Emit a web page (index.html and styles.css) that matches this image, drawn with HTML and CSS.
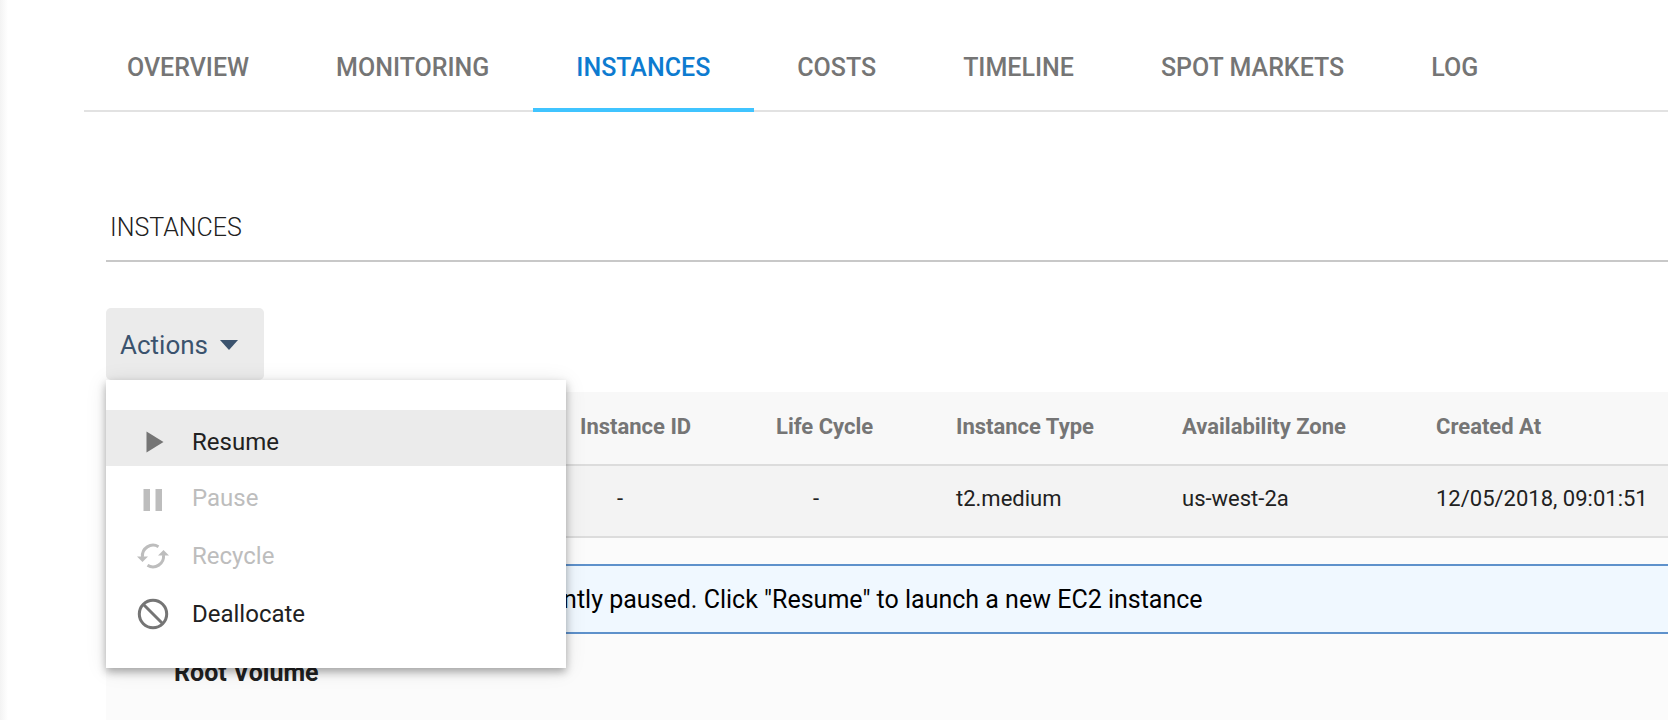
FILE: index.html
```html
<!DOCTYPE html>
<html lang="en">
<head>
<meta charset="utf-8">
<title>Instances</title>
<link rel="stylesheet" href="styles.css">
</head>
<body>
<div class="page">
  <nav class="tabs">
    <a class="tab" href="#overview">OVERVIEW</a>
    <a class="tab" href="#monitoring">MONITORING</a>
    <a class="tab tab-active" href="#instances" aria-current="page">INSTANCES</a>
    <a class="tab" href="#costs">COSTS</a>
    <a class="tab" href="#timeline">TIMELINE</a>
    <a class="tab" href="#spot-markets">SPOT MARKETS</a>
    <a class="tab" href="#log">LOG</a>
  </nav>
  <main class="content">
    <h1 class="title">INSTANCES</h1>
    <div class="actions">
      <button class="actions-button" type="button" aria-haspopup="menu" aria-expanded="true">
        Actions
        <svg class="caret" viewBox="0 0 18 10" aria-hidden="true"><path d="M0 0h18L9 10z"/></svg>
      </button>
      <div class="menu" role="menu">
        <button class="item item-hover" type="button" role="menuitem">
          <svg class="icon" viewBox="0 0 32 32" aria-hidden="true"><path d="M9.500 5.500l17 10.500-17 10.500z"/></svg>
          Resume
        </button>
        <button class="item" type="button" role="menuitem" disabled>
          <svg class="icon" viewBox="0 0 32 32" aria-hidden="true"><path d="M6.500 7h6.500v22H6.500zM18.500 7h6.500v22h-6.500z"/></svg>
          Pause
        </button>
        <button class="item" type="button" role="menuitem" disabled>
          <svg class="icon" viewBox="0 0 32 32" aria-hidden="true"><path class="stroke" d="M5.500 17A10.600 10.600 0 0 1 21.500 6.700"/><path d="M0 16.500h11l-5.500 5.500zM21 15.500h11L26.500 10z"/><path class="stroke" d="M26.500 15A10.600 10.600 0 0 1 10.500 25.300"/></svg>
          Recycle
        </button>
        <button class="item" type="button" role="menuitem">
          <svg class="icon" viewBox="0 0 32 32" aria-hidden="true"><circle class="stroke" cx="16" cy="16" r="13.700"/><path class="stroke" d="M6.500 6.500l19 19"/></svg>
          Deallocate
        </button>
      </div>
    </div>
    <table class="table">
      <colgroup>
        <col class="col-lead"><col class="col-id"><col class="col-cycle"><col class="col-type"><col class="col-zone"><col>
      </colgroup>
      <thead>
        <tr><th></th><th>Instance ID</th><th>Life Cycle</th><th>Instance Type</th><th>Availability Zone</th><th>Created At</th></tr>
      </thead>
      <tbody>
        <tr><td></td><td class="empty">-</td><td class="empty">-</td><td>t2.medium</td><td>us-west-2a</td><td>12/05/2018, 09:01:51</td></tr>
      </tbody>
    </table>
    <section class="details">
      <p class="notice">The instance is currently paused. Click "Resume" to launch a new EC2 instance</p>
      <h2 class="subtitle">Root Volume</h2>
    </section>
  </main>
</div>
</body>
</html>
```
FILE: styles.css
```css
* {
  box-sizing: border-box;
}

body {
  margin: 0;
  background: #fff;
  color: #212121;
  font-family: Roboto, "Liberation Sans", sans-serif;
  font-size: 24px;
  line-height: 28px;
}

button {
  margin: 0;
  border: 0;
  background: none;
  color: inherit;
  font: inherit;
  text-align: left;
}

.page {
  display: flex;
  flex-direction: column;
  min-height: 100vh;
  padding-left: 84px;
  background: linear-gradient(to right, #f3f3f3, #fff 8px);
  overflow: hidden;
}

.tabs {
  display: flex;
  padding-top: 54px;
  border-bottom: 2px solid #e2e2e2;
}

.tab {
  margin-bottom: -2px;
  padding: 0 44px 26px 43px;
  border-bottom: 4px solid transparent;
  color: #757575;
  font-size: 25px;
  font-weight: 500;
  text-decoration: none;
  white-space: nowrap;
}

.tab-active {
  border-bottom-color: #40c4ff;
  color: #0d7bd0;
}

.content {
  display: flex;
  flex: 1;
  flex-direction: column;
  padding-left: 22px;
}

.title {
  margin: 102px 0 46px;
  padding: 0 4px 18px;
  border-bottom: 2px solid #c8c8c8;
  font-size: 25px;
  font-weight: 300;
}

.actions {
  position: relative;
  align-self: flex-start;
  margin-bottom: 12px;
}

.actions-button {
  display: flex;
  align-items: center;
  gap: 12px;
  width: 158px;
  height: 72px;
  padding: 1px 14px 0;
  border-radius: 5px;
  background: #ebebeb;
  color: #3b536e;
  font-size: 26px;
}

.caret {
  width: 18px;
  height: 10px;
  fill: currentColor;
}

.menu {
  position: absolute;
  top: 100%;
  left: 0;
  z-index: 1;
  display: flex;
  flex-direction: column;
  width: 460px;
  padding: 30px 0 28px;
  background: #fff;
  box-shadow: 0 4px 8px rgba(0, 0, 0, 0.3), 0 2px 20px rgba(0, 0, 0, 0.1);
}

.item {
  display: flex;
  align-items: center;
  gap: 23px;
  height: 58px;
  padding: 16px 31px 10px;
}

.item-hover {
  height: 56px;
  padding-bottom: 8px;
  background: #ebebeb;
}

.item:disabled {
  color: #bdbdbd;
}

.icon {
  width: 32px;
  height: 32px;
  fill: #757575;
}

.stroke {
  fill: none;
  stroke: #757575;
  stroke-width: 3;
}

.item:disabled .icon {
  fill: #bdbdbd;
}

.item:disabled .stroke {
  fill: none;
  stroke: #bdbdbd;
}

.table {
  width: 100%;
  table-layout: fixed;
  border-collapse: separate;
  border-spacing: 0;
  font-size: 22px;
}

.table th,
.table td {
  padding: 19px 0 23px;
  text-align: left;
  white-space: nowrap;
}

.table th {
  padding: 21px 0 23px;
  border-bottom: 2px solid #dcdcdc;
  background: #f8f8f8;
  color: #757575;
  font-weight: 700;
}

.table td {
  border-bottom: 2px solid #dcdcdc;
  background: #f3f3f3;
}

.table td.empty {
  padding-left: 37px;
}

.col-lead {
  width: 474px;
}

.col-id {
  width: 196px;
}

.col-cycle {
  width: 180px;
}

.col-type {
  width: 226px;
}

.col-zone {
  width: 254px;
}

.details {
  flex: 1;
  padding: 26px 0 0 68px;
  background: #fbfbfb;
}

.notice {
  margin: 0 0 25px;
  padding: 20px 156px 18px;
  border: 2px solid #5e91cb;
  border-right: 0;
  background: #f0f8ff;
  color: #000;
  font-size: 25px;
}

.subtitle {
  margin: 0;
  font-size: 25px;
  font-weight: 700;
}
```
